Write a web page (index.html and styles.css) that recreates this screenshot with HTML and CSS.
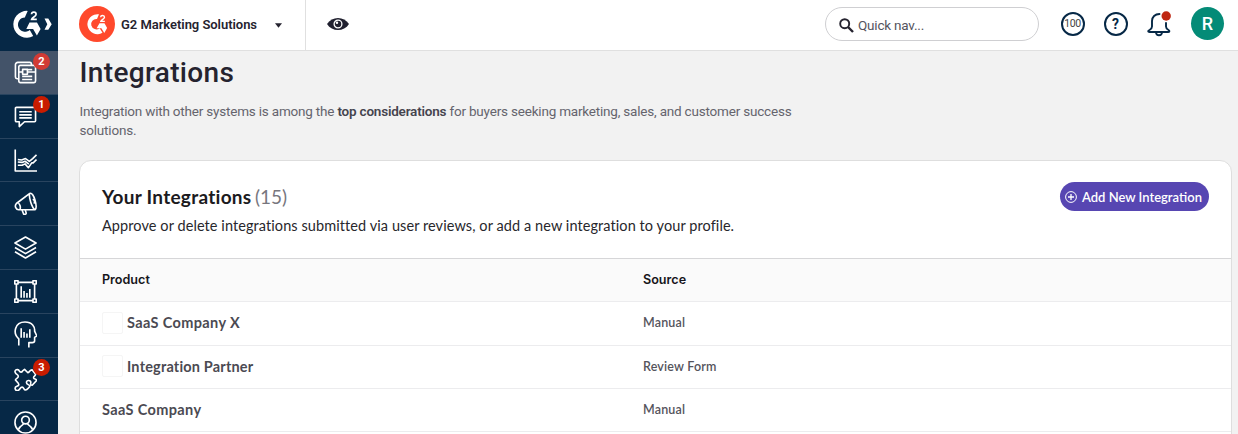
FILE: index.html
```
<!DOCTYPE html>
<html lang="en">
<head>
<meta charset="utf-8">
<title>Integrations</title>
<link rel="stylesheet" href="styles.css">
</head>
<body>
<div class="app">
  <nav class="sidebar">
    <a class="brand">
      <svg width="58" height="51" viewBox="0 0 58 51" fill="none">
        <path d="M27.700 10.900A13.400 13.400 0 1 0 33.200 36L29.800 30.100A7.200 7.200 0 1 1 24.800 17.400Z" fill="#fff"/>
        <path d="M29.500 22.500h7.500l3.600 6.400-3.700 6.600-3.800-6.600h-6.800z" fill="#fff"/>
        <path d="M31.500 14.200c.2-3 4.600-2.700 4.600 0 0 2.300-4 3-4.500 5.200h5.200" stroke="#fff" stroke-width="1.700"/>
        <path d="M44.500 18.500h3.800l3.400 5.700-3.400 5.600h-3.800l2.800-5.600z" fill="#fff"/>
      </svg>
    </a>
    <a class="item active">
      <svg class="icon" viewBox="0 0 24 24"><path d="M5 18.500H3.200A1.700 1.700 0 0 1 1.500 16.800V4A2.500 2.500 0 0 1 4 1.500h12.500A1.700 1.700 0 0 1 18.200 3v1.500"/><rect x="5" y="4.500" width="17.500" height="18" rx="1.600"/><path d="M5 11.500h4M14 11.500h8.500M8.500 16h10.500M8.500 19.300h10.500"/><rect x="9" y="8.800" width="5" height="5"/><path d="M14 9h5"/></svg>
      <span class="badge light">2</span>
    </a>
    <a class="item">
      <svg class="icon" viewBox="0 0 24 24"><path d="M2.500 2.500h19a1 1 0 0 1 1 1v13a1 1 0 0 1-1 1H11l-5.500 5v-5h-3a1 1 0 0 1-1-1v-13a1 1 0 0 1 1-1zM5.500 7h13M5.500 10.300h13M5.500 13.500h13"/></svg>
      <span class="badge">1</span>
    </a>
    <a class="item">
      <svg class="icon" viewBox="0 0 24 24"><path d="M1.300.5v22.500H24M4 11l4 .500 4-1.500 4 3 3.500-3L23.500 6M4 17h4.500l3-1.500 3.500 4 3.500-5h1.500L23.500 11M4 13.500l4.500.5 3-1.200 4 3"/></svg>
    </a>
    <a class="item">
      <svg class="icon" viewBox="0 0 24 24"><path d="M2.500 12L16.500 1.500C20.500-.5 25 16 22 18.500L5.500 18.500C2 19 .2 14.500 2.500 12zM16.500 1.500c-1.500 3 2 15 5.500 17M19.500 8c2-.5 2.500 3.500 1 3.800M4.500 12c1.700 0 2.700 4 1.700 6.500M8.500 19l1.500 4c1.200.8 3 .2 2.700-1.200L11.700 18.500"/></svg>
    </a>
    <a class="item">
      <svg class="icon" viewBox="0 0 24 24"><path d="M12 1l11 6.300-11 6.400L1 7.300zM1 12l11 6.400L23 12M1 16.500l11 6.400 11-6.400"/></svg>
    </a>
    <a class="item">
      <svg class="icon" viewBox="0 0 24 24"><path d="M4 2.500h16M4 21.500h16M2.500 4v16M21.500 4v16M7.500 6.500v12M10.500 11.500v7M13.500 13.500v5M16.500 9.500v9"/><g fill="#062846"><rect x=".8" y=".8" width="3.400" height="3.400"/><rect x="19.800" y=".8" width="3.400" height="3.400"/><rect x=".8" y="19.800" width="3.400" height="3.400"/><rect x="19.800" y="19.800" width="3.400" height="3.400"/></g></svg>
    </a>
    <a class="item">
      <svg class="icon tall" viewBox="0 0 24 28"><path d="M5 25.500v-7C-1.500 13 .5 1 11.500 1 19 1 22 6 21.500 10.500l2.300 5-2.300 1.500v3.500c0 1.500-1 2-2.500 2h-3.500v5M7.500 7.500v10M10.500 11.500v6M13.500 13v4.500M16.500 8.500v9"/></svg>
    </a>
    <a class="item">
      <svg class="icon" viewBox="0 0 24 24"><path d="M1.500 5C-.5 2 4.500.5 5.500 3 6.500 5 8.500 4.500 9 3L11 1.500l3.500 3.500c2-.5 2-3.500 4.500-3l3.500 4.500c0 2-2.500 2-2 4 .5 1.500 3 .5 3 2.500L19 18c-1.500 0-2-1-1.500-2.500.5-3-4.500-3.500-4.500-.5 0 2.500 2.500 2 3.500 3.500.5 1-3 4-4.500 4.500-2 0-1.500-3-3.500-3-2.500 0-2 3-4.500 3.500-3 .5-4-3.500-1-4.500 2-.5 2.500-1.500 1.500-3L1.500 12.500C2 10.500 4.500 11 4.500 8.500 4 6.500 2.500 7 1.500 5z"/></svg>
      <span class="badge">3</span>
    </a>
    <a class="item">
      <svg class="icon" viewBox="0 0 24 24"><circle cx="12" cy="12" r="11"/><circle cx="12" cy="9.500" r="4"/><path d="M4.500 19.500c1-3 3-4.300 5.500-6M19.500 19.500c-1-3-3-4.300-5.500-6"/></svg>
    </a>
  </nav>

  <div class="page">
    <header class="topbar">
      <div class="company">
        <svg width="36" height="36" viewBox="0 0 36 36" fill="none">
          <circle cx="18" cy="18" r="18" fill="#ff492c"/>
          <path d="M20 8.300A10 10 0 1 0 23.500 26.800L20.600 22.200A5.200 5.200 0 1 1 18 13Z" fill="#fff"/>
          <path d="M20.500 17.300h5l2.600 4.800-2.800 5-2.900-4.900h-4.800z" fill="#fff"/>
          <path d="M21.600 11.200c.2-2.400 3.900-2.200 3.900 0 0 1.800-3.200 2.300-3.700 4.200h4" stroke="#fff" stroke-width="1.400"/>
        </svg>
        <span class="company-name">G2 Marketing Solutions</span>
        <svg class="caret" width="7" height="5" viewBox="0 0 7 5"><path d="M0 .3h7L3.500 4.800z" fill="#25232f"/></svg>
      </div>
      <svg class="eye" width="22" height="12" viewBox="0 0 22 12"><path d="M0 6C5-2 17-2 22 6 17 14 5 14 0 6z" fill="#20202f"/><circle cx="11" cy="6" r="3.900" fill="none" stroke="#fff" stroke-width="1.300"/><circle cx="10" cy="4.800" r="1.200" fill="#fff"/></svg>
      <div class="search">
        <svg width="15" height="15" viewBox="0 0 15 15" fill="none" stroke="#25232f"><circle cx="5.700" cy="5.700" r="4.500" stroke-width="1.900"/><path d="M9 9l5 5" stroke-width="2.400"/></svg>
        <span class="search-text">Quick nav...</span>
      </div>
      <span class="ring score"><span>100</span></span>
      <span class="ring help">?</span>
      <svg class="bell" width="24" height="26" viewBox="0 0 24 26" fill="none" stroke="#062846" stroke-width="1.900" stroke-linecap="round" stroke-linejoin="round"><path d="M12.500 3C8 3 5 6 5 10v5.500c0 1.500-.8 2.500-2.500 3.500C.5 20 1 21 2.500 21h18.500c1.500 0 2-1 .5-2-1.500-.8-2.500-2-2.500-3.500V12M9 21.500c.3 3.700 5.700 3.700 6 0"/><circle cx="19.200" cy="5" r="4.700" fill="#bf2712" stroke="none"/></svg>
      <span class="avatar">R</span>
    </header>

    <main class="content">
      <h1>Integrations</h1>
      <p class="intro">Integration with other systems is among the <b>top considerations</b> for buyers seeking marketing, sales, and customer success<br>solutions.</p>
      <section class="card">
        <div class="card-head">
          <div>
            <h2><span class="title">Your Integrations</span><span class="count">(15)</span></h2>
            <p class="desc">Approve or delete integrations submitted via user reviews, or add a new integration to your profile.</p>
          </div>
          <button class="add"><svg width="12" height="12" viewBox="0 0 12 12" fill="none" stroke="#fff"><circle cx="6" cy="6" r="5.400"/><path d="M6 3v6M3 6h6" stroke-width="1.300"/></svg><span class="add-label">Add New Integration</span></button>
        </div>
        <div class="row head"><span>Product</span><span>Source</span></div>
        <div class="row"><span class="name"><i class="thumb"></i><span>SaaS Company X</span></span><span class="source">Manual</span></div>
        <div class="row"><span class="name tight"><i class="thumb"></i><span>Integration Partner</span></span><span class="source">Review Form</span></div>
        <div class="row"><span class="name"><span>SaaS Company</span></span><span class="source">Manual</span></div>
        <div class="row"></div>
      </section>
    </main>
  </div>
</div>
</body>
</html>
```
FILE: styles.css
```
* { box-sizing: border-box; }
body { margin: 0; background: #f2f2f2; font-family: Roboto, sans-serif; color: #25232f; font-variant-ligatures: none; }
.app { display: flex; width: 1238px; height: 434px; overflow: hidden; }
.sidebar { width: 58px; flex: none; background: #062846; display: flex; flex-direction: column; height: 460px; }
.brand { height: 51px; flex: none; }
.brand svg { display: block; }
.item { position: relative; flex: none; height: 43.800px; border-bottom: 1px solid #29445f; padding: 10px 0 0 14px; }
.item.active { background: #435369; }
.icon { display: block; width: 23px; height: 23px; fill: none; stroke: #fff; stroke-width: 1.700; stroke-linejoin: round; }
.icon.tall { height: 27px; margin-top: -3px; }
.badge { position: absolute; left: 33px; top: 1.500px; width: 17px; height: 17px; border-radius: 50%; background: #c91c00; color: #fff; font: 700 11px/17px Roboto, sans-serif; text-align: center; }
.badge.light { background: #d23b35; }
.page { flex: 1; min-width: 0; }
.topbar { display: flex; align-items: center; height: 51px; background: #fff; border-bottom: 1px solid #e0e0e0; }
.company { display: flex; align-items: center; width: 248px; height: 50px; padding: 0 0 2px 21px; border-right: 1px solid #e0e0e0; }
.company-name { margin-left: 6px; width: 136px; white-space: nowrap; font-size: 13px; font-weight: 600; letter-spacing: -.04px; }
.caret { margin: 2px 0 0 17.500px; }
.eye { margin: -2px 0 0 21px; }
.search { display: flex; align-items: center; width: 214px; height: 34px; margin-left: 476px; margin-top: -2px; padding: 3px 0 0 13px; border: 1px solid #cfcfd2; border-radius: 18px; }
.search-text { margin-left: 4px; font-size: 13.500px; letter-spacing: -.2px; color: #55545e; margin-top: -1px; }
.ring { display: flex; align-items: center; justify-content: center; width: 24px; height: 24px; border: 2px solid #062846; border-radius: 50%; margin-top: -3px; color: #062846; flex: none; }
.score { margin-left: 21.500px; font-size: 10.500px; color: #444; letter-spacing: -.4px; padding-bottom: 1px; }
.help { margin-left: 19px; font-size: 14px; font-weight: 700; }
.bell { margin: -2px 0 0 19.500px; flex: none; }
.avatar { margin: -3px 0 0 20px; width: 33px; height: 33px; flex: none; border-radius: 50%; background: #048b77; color: #fff; font: 500 18px/34px Roboto, sans-serif; text-align: center; }
.content { padding: 5px 6px 0 21px; }
h1 { margin: 0 0 0 .5px; height: 35px; font-size: 28px; line-height: 34px; font-weight: 500; letter-spacing: .35px; }
.intro { margin: 11px 0 0 .5px; white-space: nowrap; font-size: 13.500px; line-height: 19px; letter-spacing: -.2px; color: #65646d; }
.intro b { font-weight: 600; color: #45444e; }
.card { margin-top: 20px; height: 300px; background: #fff; border: 1px solid #dedede; border-radius: 12px 12px 0 0; font-family: Lato, sans-serif; }
.card-head { display: flex; justify-content: space-between; height: 98px; padding: 21px 22px 0 22px; border-bottom: 1px solid #d6d6d8; }
h2 { display: flex; gap: 4px; margin: 3px 0 0; font-size: 19px; line-height: 23px; }
.title { width: 149px; white-space: nowrap; color: #1b1a20; letter-spacing: .28px; }
.count { font-weight: 400; color: #77767e; }
.desc { margin: 7px 0 0; font-size: 14.500px; line-height: 22px; white-space: nowrap; letter-spacing: .08px; color: #28272c; }
.add { display: flex; align-items: center; width: 149px; height: 29px; margin: 0; padding: 0 0 0 5px; border: 0; border-radius: 15px; background: #5746b2; color: #fff; font: 600 13px Lato, sans-serif; white-space: nowrap; }
.add-label { margin-left: 5px; }
.row { display: grid; grid-template-columns: 541px 1fr; align-items: center; height: 43.300px; padding: 0 0 1px 22px; border-bottom: 1px solid #ececee; }
.row.head { background: #fafafa; font: 600 12.600px Inter, sans-serif; color: #17161b; padding-bottom: 2px; }
.name { display: flex; align-items: center; gap: 4px; font-size: 14.500px; font-weight: 700; letter-spacing: .36px; color: #4b4a52; }
.name.tight { letter-spacing: .18px; }
.thumb { width: 21px; height: 22px; border: 1px solid #f5f5f5; border-radius: 2px; }
.source { font-size: 12.500px; font-weight: 600; letter-spacing: .18px; color: #55545c; }
```
